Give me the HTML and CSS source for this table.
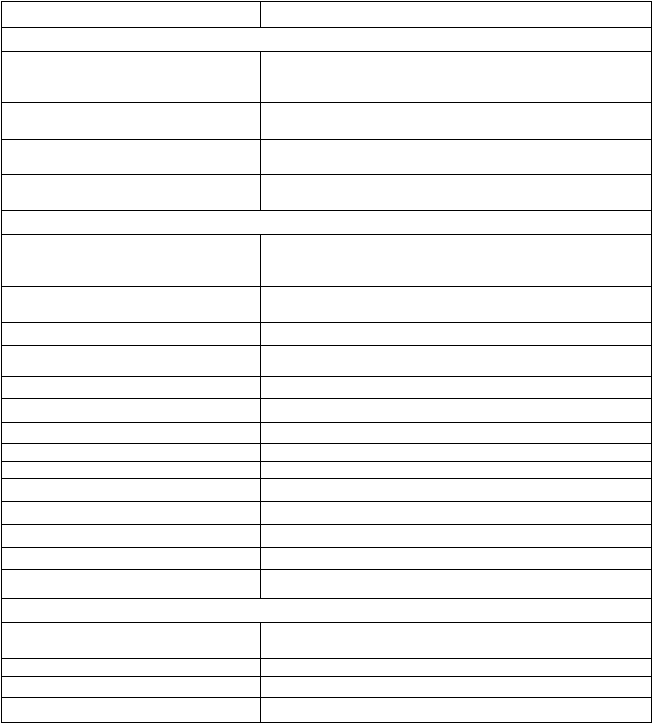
FILE: index.html
```html
<!DOCTYPE html>
<html>
<head>
<meta charset="utf-8">
<link rel="stylesheet" href="styles.css">
</head>
<body>
<div class="sheet">
  <div class="cell r26"></div><div class="cell r26"></div>
  <div class="cell span r24"></div>
  <div class="cell r51"></div><div class="cell r51"></div>
  <div class="cell r37"></div><div class="cell r37"></div>
  <div class="cell r35"></div><div class="cell r35"></div>
  <div class="cell r36"></div><div class="cell r36"></div>
  <div class="cell span r24"></div>
  <div class="cell r52"></div><div class="cell r52"></div>
  <div class="cell r36"></div><div class="cell r36"></div>
  <div class="cell r23"></div><div class="cell r23"></div>
  <div class="cell r31"></div><div class="cell r31"></div>
  <div class="cell r22"></div><div class="cell r22"></div>
  <div class="cell r24"></div><div class="cell r24"></div>
  <div class="cell r21"></div><div class="cell r21"></div>
  <div class="cell r18"></div><div class="cell r18"></div>
  <div class="cell r17"></div><div class="cell r17"></div>
  <div class="cell r23"></div><div class="cell r23"></div>
  <div class="cell r23"></div><div class="cell r23"></div>
  <div class="cell r23"></div><div class="cell r23"></div>
  <div class="cell r22"></div><div class="cell r22"></div>
  <div class="cell r29"></div><div class="cell r29"></div>
  <div class="cell span r24"></div>
  <div class="cell r36"></div><div class="cell r36"></div>
  <div class="cell r18"></div><div class="cell r18"></div>
  <div class="cell r21"></div><div class="cell r21"></div>
  <div class="cell r25"></div><div class="cell r25"></div>
</div>
</body>
</html>
```

FILE: styles.css
```css
html, body {
  margin: 0;
  padding: 0;
  background: #ffffff;
  font-family: "Liberation Sans", Arial, sans-serif;
}
body {
  padding: 1px 0 0 1px;
}
.sheet {
  display: grid;
  grid-template-columns: 259px 391px;
  width: 650px;
  border-top: 1px solid #000;
  border-left: 1px solid #000;
}
.cell {
  box-sizing: border-box;
  border-right: 1px solid #000;
  border-bottom: 1px solid #000;
}
.span { grid-column: 1 / -1; }
.r17 { height: 17px; }
.r18 { height: 18px; }
.r21 { height: 21px; }
.r22 { height: 22px; }
.r23 { height: 23px; }
.r24 { height: 24px; }
.r25 { height: 25px; }
.r26 { height: 26px; }
.r29 { height: 29px; }
.r31 { height: 31px; }
.r35 { height: 35px; }
.r36 { height: 36px; }
.r37 { height: 37px; }
.r51 { height: 51px; }
.r52 { height: 52px; }
```
